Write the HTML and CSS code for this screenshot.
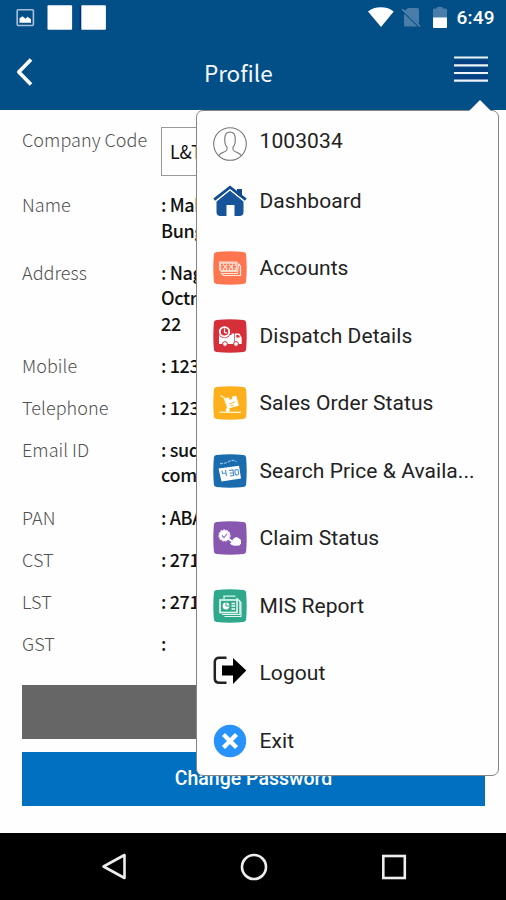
FILE: index.html
```html
<!DOCTYPE html>
<html lang="en">
<head>
<meta charset="utf-8">
<title>Profile</title>
<link rel="stylesheet" href="styles.css">
</head>
<body>
<div class="phone">
  <div class="statusbar">
    <svg class="notif-icons" width="100" height="34" viewBox="0 0 100 34">
      <rect x="17.200" y="9.700" width="16.200" height="15.800" rx="1" fill="none" stroke="#a9c0d8" stroke-width="1.600"/>
      <path d="M19.500 22.800v-4.500l3-2 3 2.500 2-2 3.500 2.500v3.500z" fill="#fff"/>
      <rect x="47.500" y="5.300" width="24.600" height="24.400" rx="1" fill="#fff"/>
      <path d="M80.500 6v23" stroke="#002b85" stroke-width="1.500"/>
      <rect x="81.300" y="5.300" width="24.600" height="24.400" rx="1" fill="#fff"/>
    </svg>
    <div class="system-icons">
      <svg width="84" height="34" viewBox="365 0 84 34">
        <path d="M368 11.500C374 5.700 387.500 5.700 393.700 11.500L381 27z" fill="#fff"/>
        <path d="M408 8h9.500q1.500 0 1.500 1.500v14.500L404.800 10.800zM404 13.500L417.500 26.500H405.500q-1.500 0-1.500-1.500z" fill="#4a7ea8"/>
        <path d="M402.300 9.300L420 26.500" stroke="#5c89b0" stroke-width="1.500"/>
        <path d="M433 18V10q0-1.500 1.500-1.500H437V7h5.500v1.500h3q1.500 0 1.500 1.500v8z" fill="#4a7ea8"/>
        <path d="M433 17.500h14V27q0 1-1 1h-12q-1 0-1-1z" fill="#fff"/>
      </svg>
      <span class="clock">6:49</span>
    </div>
  </div>
  <header class="appbar">
    <svg width="20" height="32" viewBox="0 0 20 32"><path d="M17 3.500L4.800 16 17 28.500" fill="none" stroke="#fff" stroke-width="3.700" stroke-linejoin="round"/></svg>
    <h1 class="title">Profile</h1>
    <svg class="burger" width="34" height="28" viewBox="0 0 34 28"><path d="M0 6.500h34M0 14h34M0 21.500h34" stroke="#063a80" stroke-width="5" opacity=".7"/><path d="M0 1.500h34M0 9.300h34M0 17h34M0 24.700h34" stroke="#eef2fa" stroke-width="2.200"/></svg>
  </header>

  <main class="content">
    <dl class="details">
      <div class="row"><dt>Company Code</dt><dd class="select">L&amp;T</dd></div>
      <div class="row"><dt>Name</dt><dd>: Mah<br>Bung</dd></div>
      <div class="row"><dt>Address</dt><dd>: Nag<br>Octr<br>22</dd></div>
      <div class="row"><dt>Mobile</dt><dd>: 123</dd></div>
      <div class="row"><dt>Telephone</dt><dd>: 123</dd></div>
      <div class="row"><dt>Email ID</dt><dd>: sud<br>com</dd></div>
      <div class="row"><dt>PAN</dt><dd>: ABA</dd></div>
      <div class="row"><dt>CST</dt><dd>: 271</dd></div>
      <div class="row"><dt>LST</dt><dd>: 271</dd></div>
      <div class="row"><dt>GST</dt><dd>:</dd></div>
    </dl>
    <div class="btn btn-grey"></div>
    <div class="btn btn-blue">Change Password</div>
  </main>

  <div class="navbar">
    <svg width="28" height="30" viewBox="0 0 28 30"><path d="M24.500 3v23L3.500 14.500z" fill="none" stroke="#eee" stroke-width="2.600" stroke-linejoin="round"/></svg>
    <svg width="30" height="30" viewBox="0 0 30 30"><circle cx="15" cy="15" r="12" fill="none" stroke="#eee" stroke-width="2.600"/></svg>
    <svg width="28" height="30" viewBox="0 0 28 30"><rect x="3.300" y="4" width="21.500" height="22" fill="none" stroke="#eee" stroke-width="2.600"/></svg>
  </div>

  <nav class="menu">
    <svg class="menu-arrow" width="22" height="11" viewBox="0 0 22 11"><path d="M0 11L11 0l11 11z" fill="#fff"/></svg>
    <div class="item item-user">
      <svg class="icon" viewBox="0 0 34 34"><g fill="none" stroke="#777" stroke-width="1.100"><circle cx="17" cy="17" r="16.300"/><path d="M6 28.700C7 25 13.500 25.500 14 22.500V20C11.500 18 9.500 5 17 5s5.500 13 3 15v2.500c.5 3 7 2.500 8 6.200"/></g></svg>
      <span>1003034</span>
    </div>
    <div class="item item-home">
      <svg class="icon" viewBox="0 0 34 34"><path d="M3.500 17.500L17 6.500l13.500 11V28q0 4-4 4H21.500V21h-8v11H7.500q-4 0-4-4z" fill="#17549a"/><path d="M24 5h5v10l-5-4z" fill="#124b8b"/><path d="M2 17.500L17 5.500l15 12" fill="none" stroke="#fff" stroke-width="1.200"/><path d="M1.200 15.600L17 3.200l15.800 12.400" fill="none" stroke="#124b8b" stroke-width="2.800"/></svg>
      <span>Dashboard</span>
    </div>
    <div class="item">
      <svg class="icon" viewBox="0 0 34 34"><path d="M3.500 1Q17-.4 30.500 1 33 1.200 33.100 3.500q1.200 13.500 0 27Q33 32.800 30.500 33 17 34.400 3.500 33 1 32.800.9 30.500-.3 17 .9 3.500 1 1.200 3.500 1z" fill="#ff7550"/><g fill="none" stroke="#ffe9df"><path d="M25 12.500l2.500 2.500v9.500H10.500L8 22" stroke-width="1.200"/><path d="M25.500 14l-1 8.500H9" stroke-width="1"/></g><path d="M6 10.500h18.500v10.500H8L6 18.800z" fill="#ffd9ca"/><path d="M8 13.500h15M8 18h15" stroke="#ff7550" stroke-width="1.500" stroke-dasharray="2 1"/><path d="M8 15.800h3M13.500 15.800h3.500M20 15.800h3" stroke="#ff7550" stroke-width="2"/></svg>
      <span>Accounts</span>
    </div>
    <div class="item">
      <svg class="icon" viewBox="0 0 34 34"><path d="M3.500 1Q17-.4 30.500 1 33 1.200 33.100 3.500q1.200 13.500 0 27Q33 32.800 30.500 33 17 34.400 3.500 33 1 32.800.9 30.500-.3 17 .9 3.500 1 1.200 3.500 1z" fill="#d5303a"/><path d="M6 16h12.500v-1.500H21V25H6zM21.700 14.500h4.500l2.500 4V25h-7z" fill="#fff"/><circle cx="11.500" cy="12.800" r="6.300" fill="#d5303a"/><circle cx="11.500" cy="12.800" r="4.700" fill="none" stroke="#fff" stroke-width="1.900"/><path d="M11.500 9.500v3.800l2.500 1" fill="none" stroke="#fff" stroke-width="1.200"/><path d="M23.300 16h2.400l1.400 2.500h-3.800z" fill="#d5303a"/><g fill="#fff" stroke="#d5303a"><circle cx="12" cy="25" r="2.400"/><circle cx="23" cy="25" r="2.400"/></g></svg>
      <span>Dispatch Details</span>
    </div>
    <div class="item">
      <svg class="icon" viewBox="0 0 34 34"><path d="M3.500 1Q17-.4 30.500 1 33 1.200 33.100 3.500q1.200 13.500 0 27Q33 32.800 30.500 33 17 34.400 3.500 33 1 32.800.9 30.500-.3 17 .9 3.500 1 1.200 3.500 1z" fill="#fdb01c"/><path d="M7.500 9.500l3.500 2 4.500 12.500" fill="none" stroke="#fff3d0" stroke-width="1.300"/><path d="M12 12.200l4-.9.600 2.500 3-.7-.8-2.400 4.400-1 2.800 9.800-11 3.200z" fill="#fff"/><path d="M16.500 18l5-2M17.500 20l3-.9" stroke="#fdb01c" stroke-width="1"/><circle cx="14.700" cy="24" r="2" fill="#fff"/><path d="M6.500 26.300h21.500" stroke="#fff5d7" stroke-width="1.300"/></svg>
      <span>Sales Order Status</span>
    </div>
    <div class="item">
      <svg class="icon" viewBox="0 0 34 34"><path d="M3.500 1Q17-.4 30.500 1 33 1.200 33.100 3.500q1.200 13.500 0 27Q33 32.800 30.500 33 17 34.400 3.500 33 1 32.800.9 30.500-.3 17 .9 3.500 1 1.200 3.500 1z" fill="#1a6caf"/><path d="M7 9.500q5 .3 9-2t7.500.2" fill="none" stroke="#8fc1e5" stroke-width="1.300" stroke-dasharray="3 1"/><path d="M5.500 14.500l20.500-2.700 2 12.700-19.500 3z" fill="#fff"/><g fill="none" stroke="#4d8fc4" stroke-width="1.100"><path d="M9 16.500l.5 3 3.500-.5M12.500 16l1 6M16 16.500l4-.6.800 5.500-3.800.6M16.500 19.200l3.500-.5"/><rect x="22" y="15.600" width="3.500" height="5.500" rx="1.700" transform="rotate(-8 23.500 18.500)"/></g></svg>
      <span>Search Price &amp; Availa...</span>
    </div>
    <div class="item">
      <svg class="icon" viewBox="0 0 34 34"><path d="M3.500 1Q17-.4 30.500 1 33 1.200 33.100 3.500q1.200 13.500 0 27Q33 32.800 30.500 33 17 34.400 3.500 33 1 32.800.9 30.500-.3 17 .9 3.500 1 1.200 3.500 1z" fill="#8857b0"/><path d="M15 17.500l5 3.500" stroke="#fff" stroke-width="2"/><circle cx="11.500" cy="14.500" r="5.500" fill="#fff" stroke="#ebdff5" stroke-width="1.300" stroke-dasharray="2 1"/><path d="M9 14.500l2 2 3.200-4" fill="none" stroke="#9a75ba" stroke-width="1.200"/><path d="M17 22.500l2-2 1-2.500 3-2 2.500 1 2.500 2v3.500l-1.500 2-5 .2q-3.500-.2-4.500-2.200z" fill="#fff"/></svg>
      <span>Claim Status</span>
    </div>
    <div class="item">
      <svg class="icon" viewBox="0 0 34 34"><path d="M3.500 1Q17-.4 30.500 1 33 1.200 33.100 3.500q1.200 13.500 0 27Q33 32.800 30.500 33 17 34.400 3.500 33 1 32.800.9 30.500-.3 17 .9 3.500 1 1.200 3.500 1z" fill="#2fa88c"/><g fill="none" stroke="#dff5ed"><path d="M11 10V7.200h11.500" stroke-width="1.300"/><path d="M25.500 10.500l2.500 3v14H11.500M23.500 9l3.300 3.500v13H9" stroke-width="1.100"/><rect x="7" y="11" width="17" height="12.500" stroke-width="1.700"/></g><circle cx="13" cy="17" r="3.400" fill="#fff"/><path d="M13 17v-3.500M13 17h3.500" stroke="#2fa88c"/><path d="M18.500 14.500H22M18.500 17H22M18.500 20H22" stroke="#fff" stroke-width="1.400"/></svg>
      <span>MIS Report</span>
    </div>
    <div class="item item-logout">
      <svg class="icon" viewBox="0 0 34 34"><path d="M13.500 4.800H6.500Q1.800 4.800 1.800 9v16.500q0 4.300 4.700 4.300h7" fill="none" stroke="#222" stroke-width="2.500"/><path d="M9 12.500h11V5l13.300 12.600L20 31v-8.500H9z" fill="#000"/></svg>
      <span>Logout</span>
    </div>
    <div class="item">
      <svg class="icon" viewBox="0 0 34 34"><circle cx="17" cy="17" r="16.200" fill="#2793fa"/><path d="M10.500 10.500l13 13M23.500 10.500l-13 13" stroke="#fff" stroke-width="4.300"/></svg>
      <span>Exit</span>
    </div>
  </nav>
</div>
</body>
</html>
```
FILE: styles.css
```css
* { box-sizing: border-box; }

body {
  margin: 0;
  background: #fff;
}

.phone {
  position: relative;
  display: flex;
  flex-direction: column;
  width: 506px;
  height: 900px;
  overflow: hidden;
  background: #fefefe;
  font-family: "Noto Sans CJK SC", sans-serif;
}

.statusbar {
  display: flex;
  justify-content: space-between;
  height: 34px;
  background: #024f87;
}

.notif-icons { overflow: visible; }

.system-icons {
  display: flex;
  gap: 7.5px;
  width: 141px;
}

.clock {
  color: #fff;
  font: 500 19px/36px Roboto, sans-serif;
  letter-spacing: 0.2px;
}

.appbar {
  display: grid;
  grid-template-columns: 20px 1fr 34px;
  align-items: start;
  height: 75.5px;
  padding: 22px 18.5px 0 14px;
  background: #024f87;
}

.title {
  margin: 2px 0 0;
  padding-right: 11px;
  color: #f4f7ff;
  font-size: 22.5px;
  font-weight: 400;
  line-height: 28px;
  text-align: center;
}

.content {
  flex: 1;
  padding: 17.5px 21px 0 22px;
}

.details {
  display: flex;
  flex-direction: column;
  gap: 16.9px;
  margin: 0 0 28px;
}

.row {
  display: grid;
  grid-template-columns: 139px 1fr;
  font-size: 18px;
  line-height: 25.32px;
}

dt {
  color: #505050;
  font-weight: 300;
  letter-spacing: 0.05px;
}

dd {
  margin: 0;
  color: #111;
  font-weight: 500;
  letter-spacing: -0.35px;
}

.select {
  height: 48.5px;
  padding-left: 8px;
  border: 1px solid #999;
  font-weight: 400;
  line-height: 47px;
}

.btn {
  height: 54px;
  margin-bottom: 13.5px;
  color: #fff;
  font: 500 19.5px/53px Roboto, sans-serif;
  text-align: center;
}

.btn-grey { background: #666; }
.btn-blue { background: #0270c0; }

.navbar {
  display: flex;
  justify-content: center;
  gap: 111px;
  height: 67px;
  padding: 19px 0 0 1px;
  background: #000;
}

.menu {
  position: absolute;
  top: 110px;
  left: 196px;
  width: 303px;
  height: 666px;
  border: 1.5px solid #858585;
  border-radius: 7px;
  background: #fefefe;
}

.menu-arrow {
  position: absolute;
  top: -11px;
  right: 7px;
}

.item {
  display: flex;
  align-items: center;
  gap: 13px;
  height: 67.5px;
  padding-left: 15.5px;
  color: #222;
  font: 400 21px/28px Roboto, sans-serif;
  letter-spacing: 0.06px;
  white-space: nowrap;
}

.item-user {
  height: 56px;
  padding-top: 9px;
}

.item-user span {
  margin-top: -6px;
  letter-spacing: 0.1px;
}

.item-logout .icon { margin-top: -6px; }

.icon {
  flex: none;
  width: 34px;
  height: 34px;
}
```
